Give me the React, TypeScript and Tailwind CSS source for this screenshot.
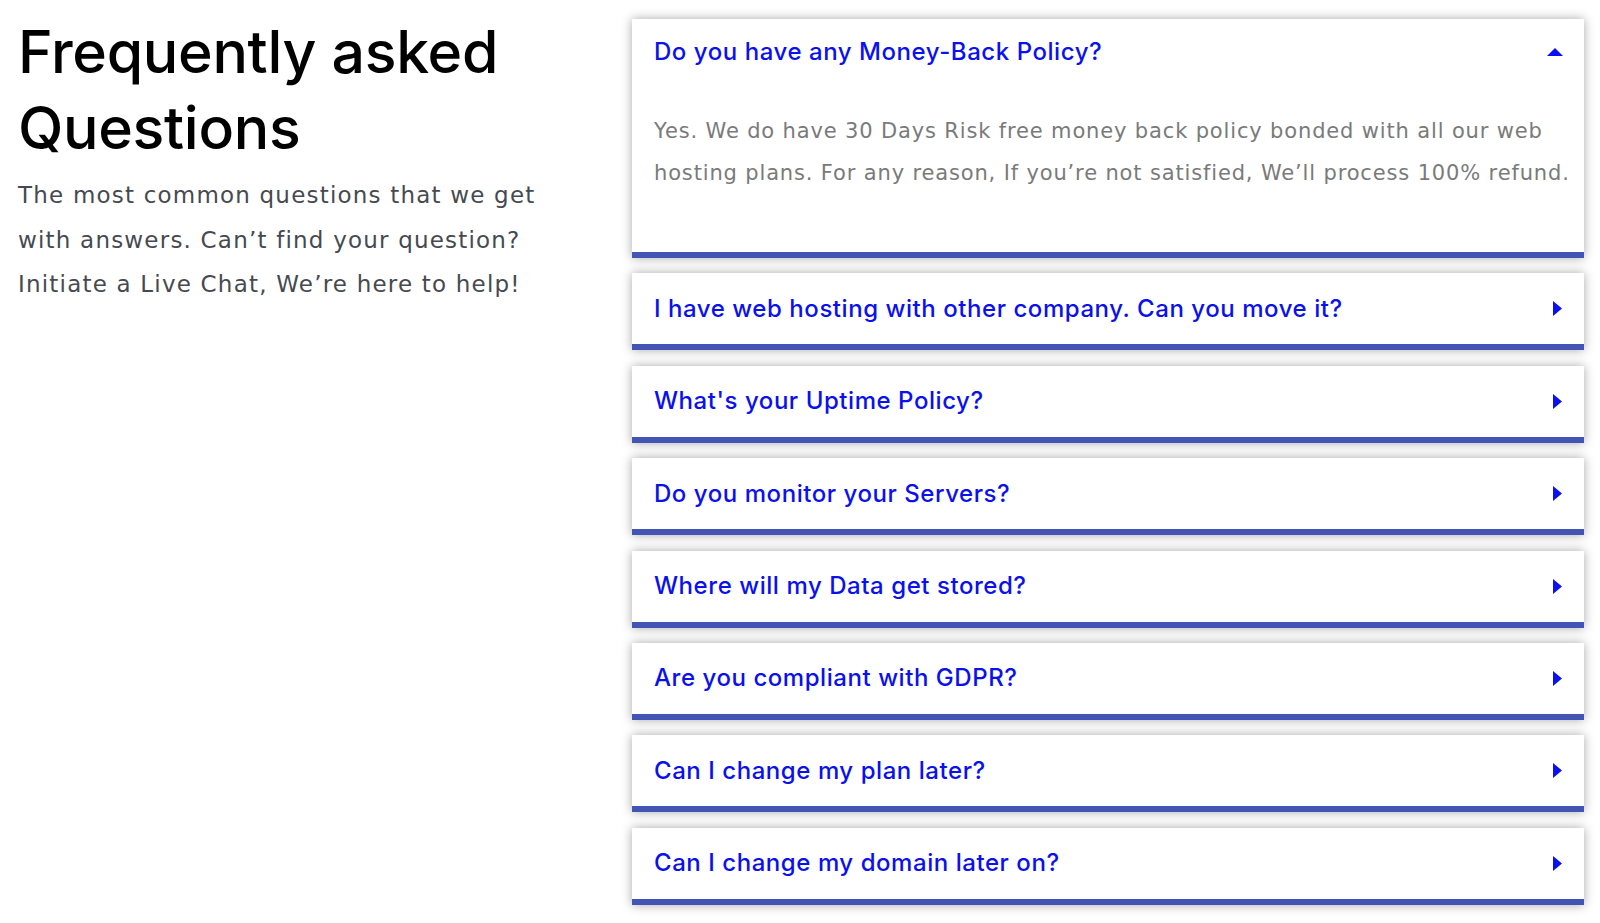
import React, { useState } from 'react';

const faqs = [
  {
    q: 'Do you have any Money-Back Policy?',
    a: [
      'Yes. We do have 30 Days Risk free money back policy bonded with all our web',
      'hosting plans. For any reason, If you’re not satisfied, We’ll process 100% refund.',
    ],
  },
  { q: 'I have web hosting with other company. Can you move it?', a: [] },
  { q: "What's your Uptime Policy?", a: [] },
  { q: 'Do you monitor your Servers?', a: [] },
  { q: 'Where will my Data get stored?', a: [] },
  { q: 'Are you compliant with GDPR?', a: [] },
  { q: 'Can I change my plan later?', a: [] },
  { q: 'Can I change my domain later on?', a: [] },
];

const Caret: React.FC<{ open: boolean }> = ({ open }) =>
  open ? (
    <svg width="16" height="8" viewBox="0 0 16 8" className="shrink-0">
      <path d="M0 8 L8 0 L16 8 Z" fill="#0a10f0" />
    </svg>
  ) : (
    <svg width="9" height="15" viewBox="0 0 9 15" className="mr-[1px] shrink-0">
      <path d="M0 0 L9 7.5 L0 15 Z" fill="#0a10f0" />
    </svg>
  );

export default function App() {
  const [open, setOpen] = useState(0);

  return (
    <div className="flex min-h-[923px] w-full bg-white">
      {/* Intro */}
      <div className="w-[632px] shrink-0 pl-[18px] pt-[14px]">
        <h2 className="font-[Inter,sans-serif] text-[59px] font-medium leading-[76px] tracking-[-0.3px] text-black">
          Frequently asked
          <br />
          Questions
        </h2>
        <p className="mt-[7px] w-[560px] font-['DejaVu_Sans',sans-serif] text-[23px] leading-[44.5px] tracking-[1.2px] text-[#464a50]">
          The most common questions that we get
          <br />
          with answers. Can’t find your question?
          <br />
          Initiate a Live Chat, We’re here to help!
        </p>
      </div>

      {/* Accordion */}
      <div className="flex w-[952px] flex-col gap-[15.4px] pt-[19px]">
        {faqs.map((item, i) => {
          const isOpen = open === i;
          return (
            <div
              key={item.q}
              className="border-b-[6px] border-[#4255b5] bg-white shadow-[0_0_10px_rgba(0,0,0,0.35)]"
            >
              <button
                onClick={() => setOpen(isOpen ? -1 : i)}
                className={`flex w-full items-center justify-between pl-[22px] pr-[21px] text-left ${
                  isOpen ? 'h-[66px]' : 'h-[71px]'
                }`}
              >
                <span className="font-[Inter,sans-serif] text-[24px] font-medium leading-[30px] tracking-[0.55px] text-[#0a10f0]">
                  {item.q}
                </span>
                <Caret open={isOpen} />
              </button>
              {isOpen && item.a.length > 0 && (
                <div className="pb-[58px] pl-[22px] pr-[4px] pt-[25px]">
                  <p className="whitespace-nowrap font-['DejaVu_Sans',sans-serif] text-[21px] leading-[42px] tracking-[0.85px] text-[#7a7a7a]">
                    {item.a[0]}
                    <br />
                    {item.a[1]}
                  </p>
                </div>
              )}
            </div>
          );
        })}
      </div>
    </div>
  );
}
